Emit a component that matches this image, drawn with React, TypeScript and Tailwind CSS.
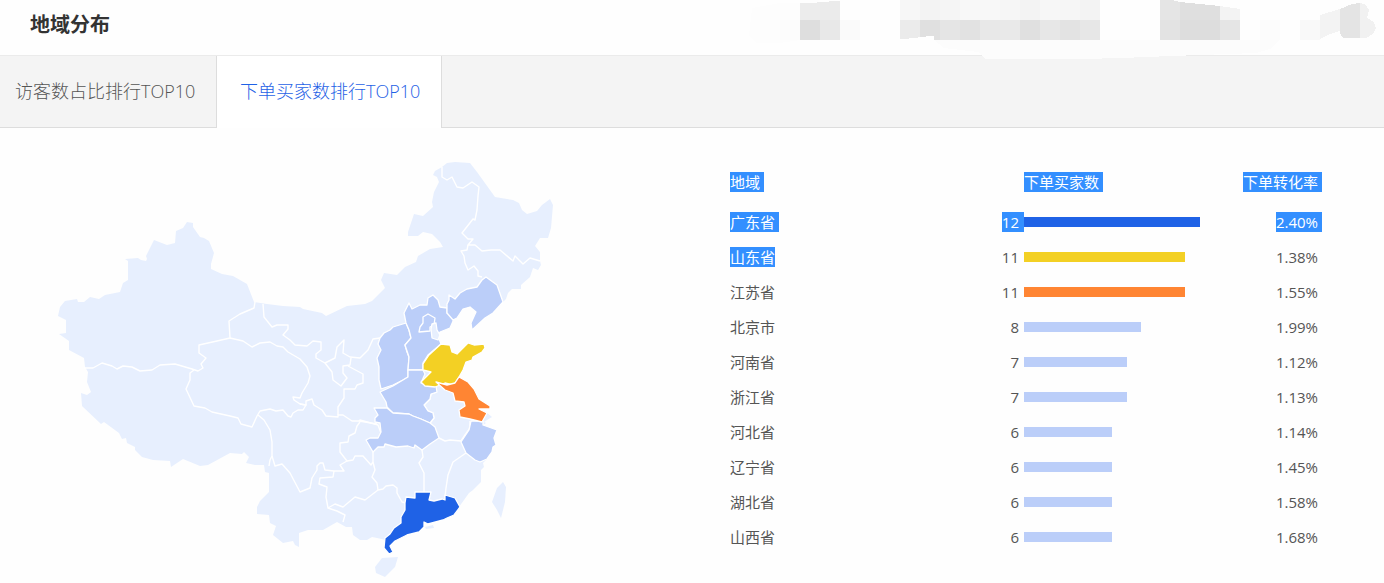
import { useState } from "react";
import clsx from "clsx";

type Row = {
  region: string;
  buyers: number;
  rate: string;
  bar: string;
  marked?: boolean;
  regionMarked?: boolean;
};

const rows: Row[] = [
  { region: "广东省", buyers: 12, rate: "2.40%", bar: "bg-[#1f62e6]", marked: true },
  { region: "山东省", buyers: 11, rate: "1.38%", bar: "bg-[#f3d024]", regionMarked: true },
  { region: "江苏省", buyers: 11, rate: "1.55%", bar: "bg-[#ff8533]" },
  { region: "北京市", buyers: 8, rate: "1.99%", bar: "bg-[#bbcef9]" },
  { region: "河南省", buyers: 7, rate: "1.12%", bar: "bg-[#bbcef9]" },
  { region: "浙江省", buyers: 7, rate: "1.13%", bar: "bg-[#bbcef9]" },
  { region: "河北省", buyers: 6, rate: "1.14%", bar: "bg-[#bbcef9]" },
  { region: "辽宁省", buyers: 6, rate: "1.45%", bar: "bg-[#bbcef9]" },
  { region: "湖北省", buyers: 6, rate: "1.58%", bar: "bg-[#bbcef9]" },
  { region: "山西省", buyers: 6, rate: "1.68%", bar: "bg-[#bbcef9]" },
];

const maxBuyers = 12;
const tabs = ["访客数占比排行TOP10", "下单买家数排行TOP10"];

const mainland =
  "58,316 60,307 65,301 77,299 78,302 84,302 90,297 99,299 105,295 120,292 123,283 128,280 128,261 125,259 138,258 141,260 146,261 147,259 146,256 154,240 167,245 175,243 176,231 183,228 187,222 193,223 193,227 200,237 204,238 209,241 214,253 211,264 211,269 222,274 233,276 247,284 254,302 267,304 283,306 300,307 303,309 322,313 326,316 347,306 365,304 372,301 385,288 381,280 384,273 397,275 405,267 416,262 418,256 430,249 443,247 440,242 432,234 423,232 418,236 408,236 408,232 414,214 423,216 433,207 432,202 434,192 439,182 437,177 433,175 435,171 442,167 447,163 455,162 470,163 477,172 495,197 513,200 519,203 522,210 527,214 537,211 542,205 550,199 553,205 551,228 548,238 540,238 535,246 540,252 540,261 541,265 538,270 533,268 530,277 521,285 521,289 512,289 508,293 506,299 503,302 493,313 485,318 472,330 471,323 476,312 470,307 463,309 457,318 453,320 450,328 440,332 438,335 440,340 441,344 450,346 452,352 457,354 468,344 483,347 482,351 472,357 466,362 463,370 459,377 468,383 473,390 479,400 489,408 477,408 486,412 492,417 487,420 484,422 486,423 483,425 496,430 494,438 496,445 493,447 492,452 487,459 483,463 484,467 481,470 481,482 473,490 469,493 459,507 450,517 428,523 423,521 423,527 418,532 407,534 395,540 390,545 392,552 388,553 386,547 386,540 377,538 372,537 367,540 360,540 353,535 352,527 346,527 337,522 323,530 308,530 299,533 299,547 295,545 293,541 283,543 273,535 276,526 270,523 269,515 257,514 257,507 260,501 269,492 269,473 265,472 264,465 255,465 246,463 249,457 244,452 242,454 230,453 208,465 200,466 183,459 171,467 170,461 153,460 142,457 135,450 135,447 127,443 126,438 122,439 119,433 104,422 101,424 82,406 81,393 87,395 91,392 87,382 88,372 85,367 84,358 69,350 69,341 59,334 66,333 66,320";

const borders = [
  "84,368 93,368 102,363 112,366 117,369 123,366 132,367 140,371 152,370 160,365 175,364 192,369 198,371 203,368 201,364 206,358 199,353 199,345 217,341 230,338 229,321 240,314 254,308 255,302",
  "230,338 243,341 252,347 260,343 270,342 277,346 283,347 288,352 300,359 307,367 310,376 308,383 302,393 300,398 293,397 294,400 300,404 306,405 303,410 298,410 293,413 291,417 288,416 283,410 276,411 270,409 260,411 257,416 252,427 241,424 238,418 230,416 212,412 205,408 194,406 186,389 190,380 190,373 194,370",
  "258,415 264,420 270,430 272,442 272,456 270,460 269,466",
  "272,456 275,466 282,464 290,473 300,492 310,488 312,478 317,470 317,466 320,463 323,463 325,470 334,471 344,471 340,465 347,461 340,452 340,443 348,442 349,436 355,433 357,426 360,422",
  "263,304 264,317 272,327 277,325 288,325 288,329 283,335 290,340 295,345 307,346 313,341 321,342 321,350 316,354 316,358 325,363 335,358 337,347 344,340 343,353 350,357 360,358 368,350 373,339 380,338",
  "325,363 332,372 333,380 341,386 347,378 343,373 343,366 350,365 351,358",
  "348,366 363,374 363,383 357,385 355,389 344,389 344,398 338,407 338,415",
  "300,404 306,405 306,401 312,399 314,405 322,410 326,416 338,417 338,415 343,415 352,421 359,421 377,424",
  "359,421 360,420 378,425 381,433",
  "470,421 470,428 465,435 461,441 450,440 445,441 439,438",
  "466,453 453,462 448,475 446,488 445,497",
  "422,450 423,457 419,463 424,473 424,492",
  "373,452 373,462 375,470 372,477 377,483 378,490",
  "347,461 353,460 355,456 363,456 371,465 373,462",
  "334,471 333,477 320,478 319,484 327,487 326,497 328,508 335,504 343,507 355,497 365,500 378,490 383,489 386,486 393,485 397,488 397,493 402,502 406,503",
  "328,508 337,511 345,515 343,522",
  "442,167 442,177 447,180 452,177 457,187 463,188 472,182 479,187 478,196 477,210 475,220 473,219 462,233 468,239 473,239 468,245 475,245 482,251 491,250 500,250 513,261 515,256 523,264 530,258 540,261",
  "468,245 467,250 461,251 464,256 465,263 468,270 474,266 478,271 478,276 482,277",
  "430,423 434,418 433,413 428,411 424,405 430,399 431,394 437,392",
];

const provinces = [
  { name: "山西省", fill: "#bbcef9", points: "380,338 384,333 390,330 393,327 406,323 409,330 411,338 405,345 407,352 409,357 408,370 408,377 403,380 393,385 381,389 379,380 379,367 377,358 381,350 378,344" },
  { name: "河北省", fill: "#bbcef9", points: "406,323 404,313 409,303 412,309 420,305 427,305 428,298 433,295 438,300 440,307 447,308 447,313 454,319 450,328 440,332 438,336 441,344 428,355 423,363 423,370 408,370 409,357 405,345 411,338 409,330" },
  { name: "辽宁省", fill: "#bbcef9", points: "447,308 447,304 449,300 449,295 455,299 460,293 467,289 477,287 482,280 486,277 497,285 503,302 493,313 485,318 472,330 471,323 476,312 470,307 463,309 457,318 453,320 447,313" },
  { name: "河南省", fill: "#bbcef9", points: "380,392 393,386 403,380 408,377 408,370 423,370 425,374 421,383 428,386 436,386 437,392 431,394 430,399 424,405 428,411 433,413 434,418 430,423 421,419 413,416 409,414 393,413 387,407 386,402" },
  { name: "湖北省", fill: "#bbcef9", points: "374,408 387,408 393,413 409,414 413,416 421,419 430,423 435,427 439,438 430,444 422,450 415,445 414,448 408,446 396,447 385,444 384,447 378,447 373,452 366,440 370,438 378,438 381,432 380,423 375,422 375,418 378,415" },
  { name: "浙江省", fill: "#bbcef9", points: "471,421 483,421 483,425 497,430 494,438 496,445 493,447 492,452 487,459 480,462 475,460 466,453 461,442 469,430" },
  { name: "北京市", fill: "#bbcef9", points: "423,317 428,314 435,318 434,325 430,327 430,331 419,332 420,327 423,323" },
  { name: "天津市", fill: "#e7effe", points: "432,324 436,323 437,330 440,335 438,340 432,338 431,329" },
  { name: "山东省", fill: "#f3d024", points: "441,344 450,345 452,352 457,354 463,348 468,343 474,345 484,344 485,348 482,352 473,357 472,360 466,362 463,370 459,377 455,383 453,385 445,383 435,387 425,386 421,382 431,372 423,370 423,364 429,355" },
  { name: "江苏省", fill: "#ff8533", points: "436,382 447,385 455,383 459,377 468,382 474,389 479,399 490,406 490,409 479,409 487,413 482,422 470,419 460,417 459,410 465,406 464,402 455,401 453,393 445,390" },
  { name: "广东省", fill: "#1f62e6", points: "405,503 406,497 415,498 415,492 431,492 429,500 434,501 442,499 445,500 445,495 455,498 460,507 454,515 447,518 443,520 428,524 424,522 424,527 419,532 407,535 395,541 390,546 393,552 389,554 384,548 385,538 390,534 394,528 401,523 401,517 405,510" },
];

function ChinaMap() {
  return (
    <svg viewBox="50 160 510 423" className="block w-[510px] max-w-full" role="img" aria-label="地域分布">
      <g fill="#e7effe">
        <polygon points={mainland} />
        <polygon points="375,567 382,558 398,557 395,567 385,577 376,573" />
        <polygon points="503,482 506,487 505,502 501,518 497,510 492,502 497,488" />
        <polygon points="425,527 433,525 434,528 426,529" />
      </g>
      <g fill="none" stroke="#ffffff" strokeWidth="1.4" strokeLinejoin="round">
        {borders.map((points) => (
          <polyline key={points} points={points} />
        ))}
      </g>
      <g stroke="#ffffff" strokeWidth="1.3" strokeLinejoin="round">
        {provinces.map((p) => (
          <polygon key={p.name} points={p.points} fill={p.fill} />
        ))}
      </g>
    </svg>
  );
}

const mosaic: [number, number, string][] = [
  [780, 20, "#fcfcfc"], [800, 20, "#dedede"], [820, 0, "#ebebeb"], [820, 20, "#e8e8e8"],
  [840, 20, "#fafafa"],
  [900, 0, "#f7f7f7"], [920, 0, "#f3f3f3"], [940, 0, "#f5f5f5"], [960, 0, "#f8f8f8"], [980, 0, "#f8f8f8"],
  [1000, 0, "#f6f6f6"], [1020, 0, "#f3f3f3"], [1040, 0, "#f7f7f7"], [1060, 0, "#f6f6f6"], [1080, 0, "#f3f3f3"],
  [900, 20, "#ebebeb"], [920, 20, "#e0e0e0"], [940, 20, "#e5e5e5"], [960, 20, "#e2e2e2"], [980, 20, "#e8e8e8"],
  [1000, 20, "#e9e9e9"], [1020, 20, "#e0e0e0"], [1040, 20, "#e7e7e7"], [1060, 20, "#e3e3e3"], [1080, 20, "#e7e7e7"],
  [1160, 20, "#e3e3e3"], [1180, 20, "#dddddd"], [1200, 20, "#dddddd"], [1220, 20, "#e5e5e5"],
  [1260, 20, "#fcfcfc"], [1300, 20, "#f9f9f9"],
];

function MosaicStrip() {
  return (
    <svg viewBox="740 0 644 60" width="644" height="60" className="pointer-events-none absolute top-0 right-0" aria-hidden="true" shapeRendering="crispEdges">
      <path d="M934 40H1280L1270 49L1256 53L1172 56L1121 58L1083 59H986L978 52L944 48Z" fill="#fcfcfc" />
      <path d="M752 8L780 3H800V40L780 43H757L749 36Z" fill="#fdfdfd" />
      {mosaic.map(([x, y, fill]) => (
        <rect key={`${x}-${y}`} x={x} y={y} width="20" height="20" fill={fill} />
      ))}
      <path d="M800 3L817 3V2H820V20H800Z" fill="#ececec" />
      <path d="M820 0H840V1L817 2Z" fill="#ffffff" />
      <path d="M900 39L918 38V37L934 36V40H900Z" fill="#ffffff" />
      <path d="M1160 0H1172L1180 2V20H1160Z" fill="#e5e5e5" />
      <path d="M1180 2L1220 6V20H1180Z" fill="#dfdfdf" />
      <path d="M1220 6L1240 9V20H1220Z" fill="#f3f3f3" />
      <path d="M1320 15L1330 12L1340 9V31L1336 32L1328 35L1320 39Z" fill="#f3f3f3" />
      <path d="M1340 9L1352 4L1360 3V38H1343L1340 33Z" fill="#e4e4e4" />
      <path d="M1360 3L1366 5L1369 10L1367 18L1374 22L1376 28L1373 34L1366 38H1360Z" fill="#f1f1f1" />
    </svg>
  );
}

function Label({ text, marked, trailing = true, end }: { text: string; marked?: boolean; trailing?: boolean; end?: boolean }) {
  return (
    <span className={clsx("block w-fit leading-5 whitespace-nowrap", trailing && "pr-1", end && "ml-auto", marked && "bg-[#338fff] text-white")}>
      {text}
    </span>
  );
}

export default function App() {
  const [active, setActive] = useState(1);

  return (
    <main className="bg-[#fefefe] font-['Open_Sans','Noto_Sans_CJK_SC',sans-serif] text-[#555]">
      <header className="relative flex h-14 items-center border-b border-[#ebebeb] px-[30px] pb-1.5">
        <h1 className="text-xl font-bold text-[#333]">地域分布</h1>
        <MosaicStrip />
      </header>

      <div role="tablist" className="flex h-[72px] bg-[#f4f4f4]">
        {tabs.map((tab, i) => (
          <button
            key={tab}
            type="button"
            role="tab"
            aria-selected={i === active}
            onClick={() => setActive(i)}
            className={clsx(
              "border-r border-[#ddd] pb-0.5 text-left text-lg font-light whitespace-nowrap",
              i === 0 ? "w-[217px] pl-[15px]" : "w-[225px] pl-[23px]",
              i === active ? "bg-white text-[#1f62e6]" : "border-b text-[#555]",
            )}
          >
            {tab}
          </button>
        ))}
        <div className="flex-1 border-b border-[#ddd]" />
      </div>

      <div className="grid grid-cols-[730fr_654fr] pt-8">
        <div className="pl-[50px]">
          <ChinaMap />
        </div>

        <div className="pr-[62px]">
          <table className="w-full table-fixed text-[15px]">
            <thead>
              <tr className="h-11">
                <th className="w-[270px] p-0 text-left font-normal"><Label text="地域" marked /></th>
                <th className="w-[200px] p-0 pl-6 text-left font-normal"><Label text="下单买家数" marked /></th>
                <th className="p-0 font-normal"><Label text="下单转化率" marked end /></th>
              </tr>
            </thead>
            <tbody>
              {rows.map((row) => (
                <tr key={row.region} className="h-[35px]">
                  <td className="p-0">
                    <Label text={row.region} marked={row.marked || row.regionMarked} trailing={!row.regionMarked} />
                  </td>
                  <td className="p-0">
                    <div className="flex items-center">
                      <div className="flex w-6 justify-end">
                        <span className={clsx("pr-[5px] leading-5", row.marked && "bg-[#338fff] text-white")}>{row.buyers}</span>
                      </div>
                      <div className="w-[176px]">
                        <div className={clsx("h-2.5", row.bar)} style={{ width: `${(row.buyers / maxBuyers) * 100}%` }} />
                      </div>
                    </div>
                  </td>
                  <td className="p-0"><Label text={row.rate} marked={row.marked} end /></td>
                </tr>
              ))}
            </tbody>
          </table>
        </div>
      </div>
    </main>
  );
}
